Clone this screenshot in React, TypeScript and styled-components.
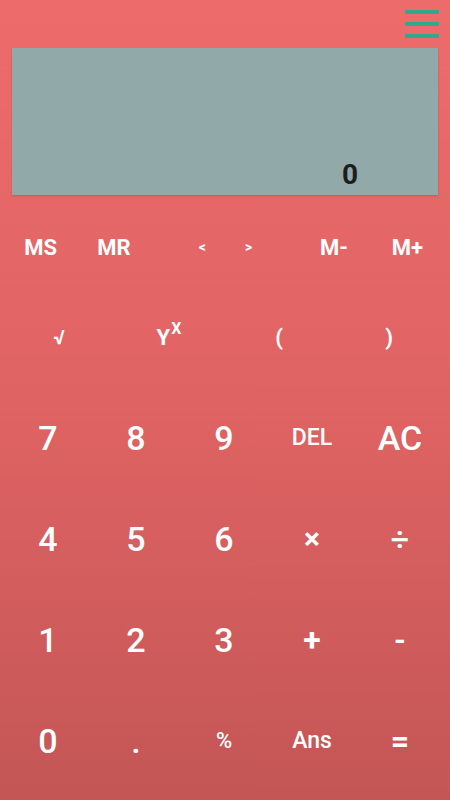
import * as React from "react"
import styled, { createGlobalStyle } from "styled-components"

const GlobalStyle = createGlobalStyle`
  html, body {
    margin: 0;
    padding: 0;
  }
  body {
    font-family: Roboto, "Liberation Sans", sans-serif;
  }
`

const Screen = styled.div`
  box-sizing: border-box;
  width: 450px;
  height: 800px;
  background: linear-gradient(180deg, #ed6b6b 0%, #e06363 50%, #c45656 100%);
  display: flex;
  flex-direction: column;
  overflow: hidden;
`

const TopBar = styled.header`
  height: 48px;
  display: flex;
  justify-content: flex-end;
  align-items: flex-start;
  padding: 10px 11px 0 0;
  box-sizing: border-box;
`

const MenuButton = styled.div`
  width: 34px;
  display: flex;
  flex-direction: column;
  gap: 8px;
`

const MenuLine = styled.span`
  display: block;
  height: 4px;
  border-radius: 1px;
  background-color: #2fa88c;
`

const Display = styled.div`
  margin: 0 12px;
  height: 147px;
  background-color: #91a9a8;
  box-shadow: 0 1px 2px rgba(0, 0, 0, 0.15);
  display: flex;
  justify-content: flex-end;
  align-items: flex-end;
  padding: 0 80px 6px 0;
  box-sizing: border-box;
`

const DisplayValue = styled.span`
  font-size: 28px;
  font-weight: bold;
  color: #1d1d1d;
  line-height: 1;
`

const MemoryRow = styled.div`
  height: 104px;
  padding: 0 6px 0 4px;
  display: grid;
  grid-template-columns: repeat(6, 1fr);
  align-items: center;
`

const FuncRow = styled.div`
  height: 76px;
  padding: 0 6px 0 4px;
  display: grid;
  grid-template-columns: repeat(4, 1fr);
  align-items: center;
`

const DigitGrid = styled.div`
  margin-top: 12px;
  padding: 0 6px 0 4px;
  display: grid;
  grid-template-columns: repeat(5, 88px);
  grid-auto-rows: 101px;
  align-items: center;
`

const Key = styled.div<{ $size: number; $weight?: number; $justify?: string; $pad?: string }>`
  display: flex;
  justify-content: ${(p) => p.$justify || "center"};
  align-items: center;
  padding: ${(p) => p.$pad || "0"};
  color: #ffffff;
  font-size: ${(p) => p.$size}px;
  font-weight: ${(p) => p.$weight || 400};
  cursor: pointer;
  user-select: none;
`

const Sup = styled.span`
  font-size: 16px;
  font-weight: bold;
  align-self: flex-start;
  margin-top: -6px;
  margin-left: 1px;
`

type K = { label: string; size: number; weight?: number }

const digits: K[] = [
  { label: "7", size: 34, weight: 500 },
  { label: "8", size: 34, weight: 500 },
  { label: "9", size: 34, weight: 500 },
  { label: "DEL", size: 23, weight: 500 },
  { label: "AC", size: 34, weight: 500 },
  { label: "4", size: 34, weight: 500 },
  { label: "5", size: 34, weight: 500 },
  { label: "6", size: 34, weight: 500 },
  { label: "×", size: 30, weight: 700 },
  { label: "÷", size: 32, weight: 500 },
  { label: "1", size: 34, weight: 500 },
  { label: "2", size: 34, weight: 500 },
  { label: "3", size: 34, weight: 500 },
  { label: "+", size: 32, weight: 700 },
  { label: "-", size: 30, weight: 700 },
  { label: "0", size: 34, weight: 500 },
  { label: ".", size: 34, weight: 500 },
  { label: "%", size: 22, weight: 500 },
  { label: "Ans", size: 23, weight: 500 },
  { label: "=", size: 32, weight: 700 },
]

const App: React.FC = () => {
  return (
    <>
      <GlobalStyle />
      <Screen>
        <TopBar>
          <MenuButton>
            <MenuLine />
            <MenuLine />
            <MenuLine />
          </MenuButton>
        </TopBar>
        <Display>
          <DisplayValue>0</DisplayValue>
        </Display>
        <MemoryRow>
          <Key $size={22} $weight={700}>MS</Key>
          <Key $size={22} $weight={700}>MR</Key>
          <Key $size={14} $weight={700} $justify="flex-end" $pad="0 18px 0 0">&lt;</Key>
          <Key $size={14} $weight={700} $justify="flex-start" $pad="0 0 0 21px">&gt;</Key>
          <Key $size={22} $weight={700}>M-</Key>
          <Key $size={22} $weight={700}>M+</Key>
        </MemoryRow>
        <FuncRow>
          <Key $size={20} $weight={700}>√</Key>
          <Key $size={22} $weight={700}>
            Y<Sup>X</Sup>
          </Key>
          <Key $size={22} $weight={700}>(</Key>
          <Key $size={22} $weight={700}>)</Key>
        </FuncRow>
        <DigitGrid>
          {digits.map((d, i) => (
            <Key key={i} $size={d.size} $weight={d.weight}>
              {d.label}
            </Key>
          ))}
        </DigitGrid>
      </Screen>
    </>
  )
}

export default App
